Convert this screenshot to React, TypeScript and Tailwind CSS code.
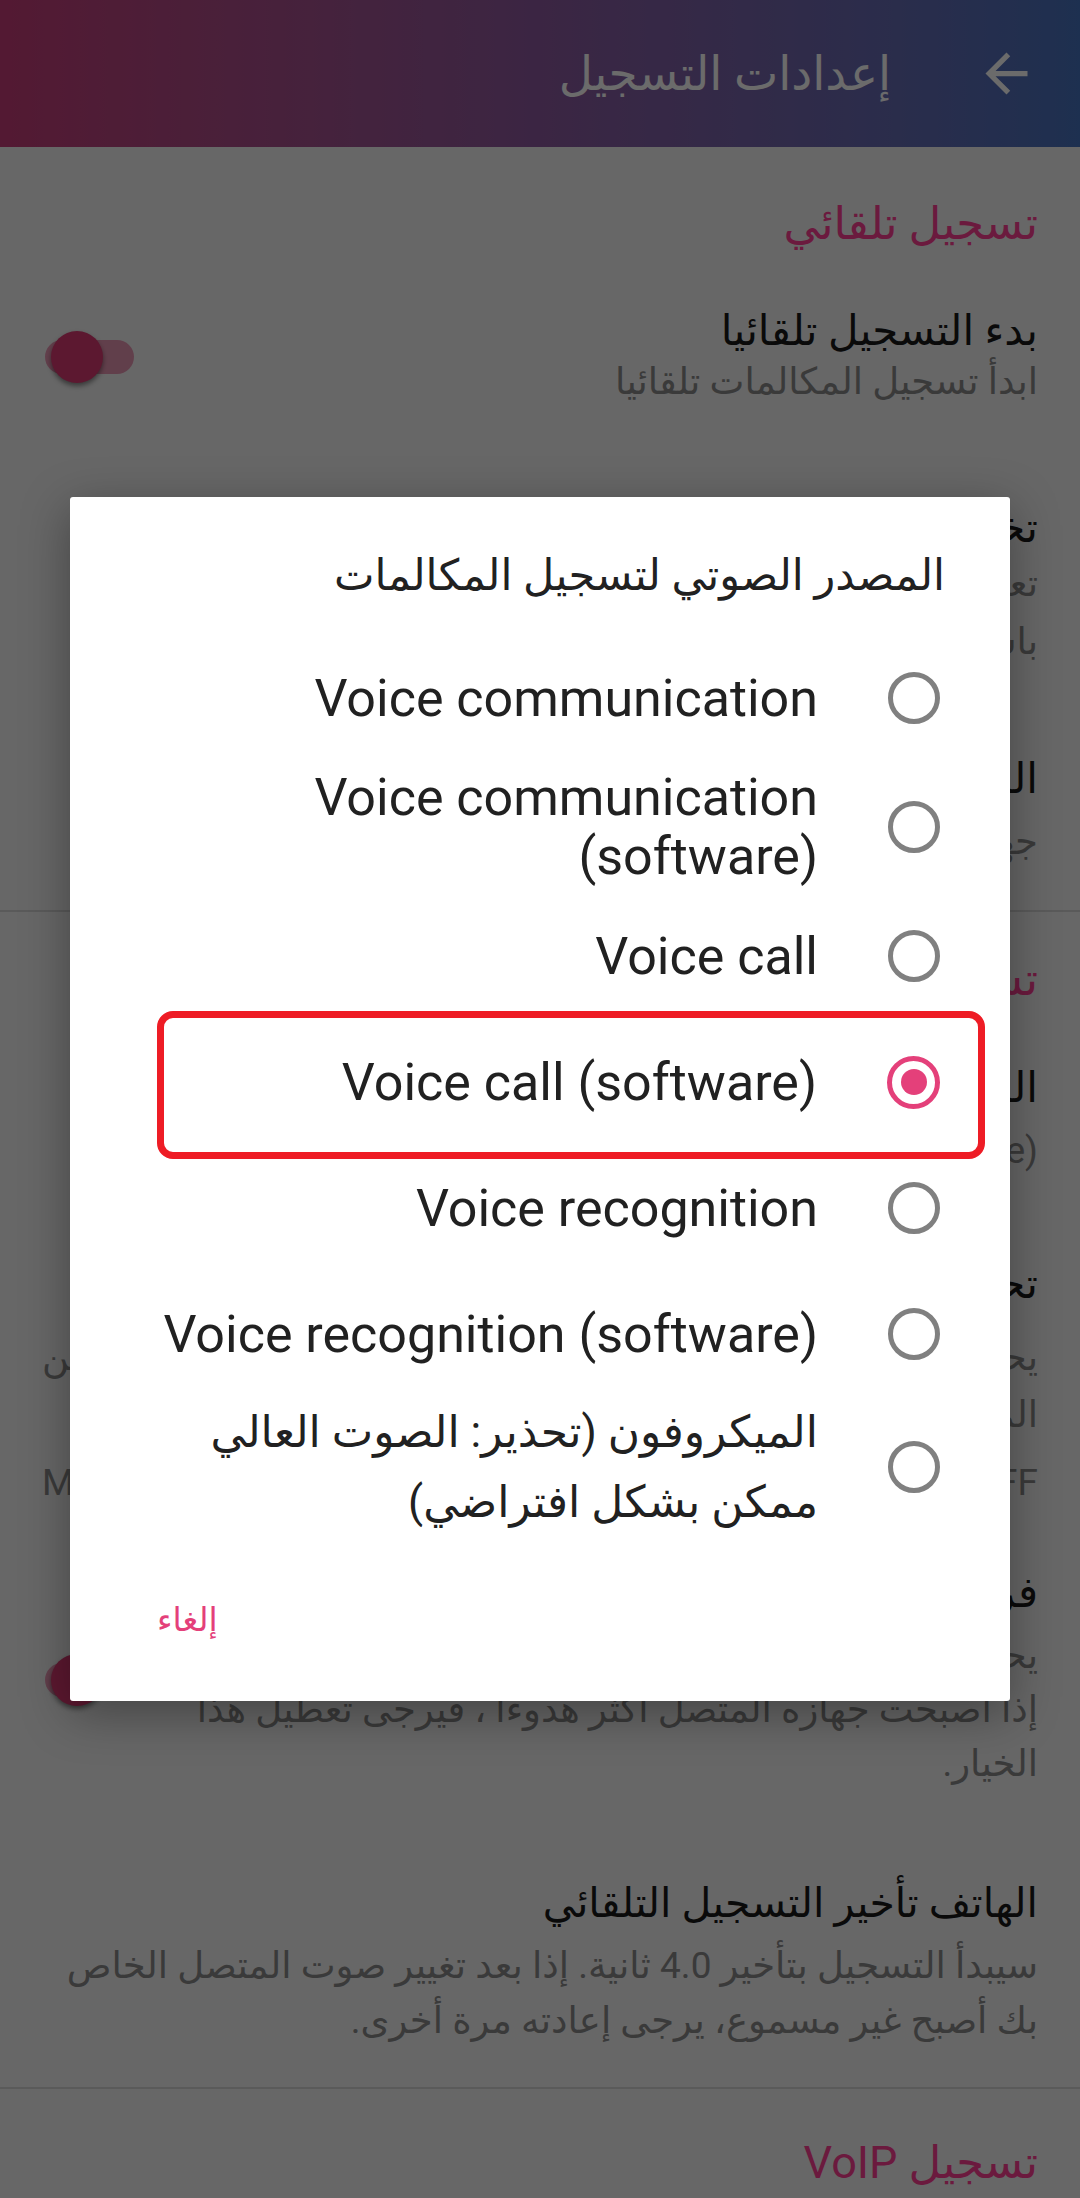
import React from "react";

function BgToggle() {
  return (
    <div className="relative w-[92px] h-[54px] shrink-0">
      <div className="absolute left-[3px] top-[10px] w-[89px] h-[34px] rounded-full bg-[#e897b4]" />
      <div className="absolute left-[9px] top-[1px] w-[52px] h-[52px] rounded-full bg-[#db3972] shadow-[0_3px_5px_rgba(0,0,0,0.45)]" />
    </div>
  );
}

function Radio({ checked }: { checked?: boolean }) {
  if (checked) {
    return (
      <div className="w-[53px] h-[53px] shrink-0 rounded-full border-[5px] border-[#e4407a] flex items-center justify-center">
        <div className="w-[26px] h-[26px] rounded-full bg-[#e4407a]" />
      </div>
    );
  }
  return <div className="w-[52px] h-[52px] shrink-0 rounded-full border-[5px] border-[#808080]" />;
}

function Option({
  children,
  checked,
  arabic,
  extra,
  highlight,
}: {
  children: React.ReactNode;
  checked?: boolean;
  arabic?: boolean;
  extra?: string;
  highlight?: boolean;
}) {
  return (
    <div className={`relative flex items-center min-h-[126px] pr-[70px] pl-[63px] gap-[70px] ${extra ?? ""}`}>
      <Radio checked={checked} />
      <div
        dir={arabic ? "rtl" : "ltr"}
        className={`flex-1 text-right text-[#212121] whitespace-nowrap ${arabic ? "leading-[70px] text-[44px]" : "leading-[59px] text-[52px]"}`}
      >
        {children}
      </div>
      {highlight && (
        <div className="absolute left-[87px] right-[25px] top-[-8px] bottom-[-14px] border-[7px] border-[#ee1c25] rounded-[16px] pointer-events-none" />
      )}
    </div>
  );
}

export default function App() {
  return (
    <div className="relative w-[1080px] h-[2198px] overflow-hidden bg-[#f5f5f5] font-[Roboto,'DejaVu_Sans',sans-serif]">
      {/* Settings page */}
      <div dir="rtl" className="flex flex-col">
        <header className="h-[147px] flex items-center gap-[84px] pr-[42px] bg-linear-to-r from-[#c63c79] via-[#8d5aa0] to-[#4772be]">
          <div className="w-[63px] h-[63px] flex items-center justify-center shrink-0">
            <svg viewBox="0 0 24 24" className="w-[63px] h-[63px] fill-white">
              <path d="M20 11H7.83l5.59-5.59L12 4l-8 8 8 8 1.41-1.41L7.83 13H20v-2z" />
            </svg>
          </div>
          <h1 className="text-[47px] leading-[60px] text-white">إعدادات التسجيل</h1>
        </header>

        <div className="px-[42px] flex flex-col">
          <div className="mt-[51px] text-[45px] leading-[52px] text-[#ff3e94]">تسجيل تلقائي</div>

          <div className="mt-[56px] flex items-center gap-[40px]">
            <div className="flex-1">
              <div className="text-[42px] leading-[50px] text-[#1a1a1a]">بدء التسجيل تلقائيا</div>
              <div className="text-[37px] leading-[52px] text-[#8a8a8a]">ابدأ تسجيل المكالمات تلقائيا</div>
            </div>
            <BgToggle />
          </div>

          <div className="mt-[95px] text-[42px] leading-[50px] text-[#1a1a1a]">تخزين التسجيلات</div>
          <div className="mt-[2px] text-[37px] leading-[58px] text-[#8a8a8a]">
            تعيين مكان حفظ ملفات التسجيل على الجهاز
            <br />
            باستخدام مدير الملفات
          </div>

          <div className="mt-[83px] text-[42px] leading-[50px] text-[#1a1a1a]">المجلد</div>
          <div className="mt-[9px] text-[37px] leading-[58px] text-[#8a8a8a]">جهاز التخزين الداخلي</div>

          <div className="mt-[39px] -mx-[42px] h-[2px] bg-[#d6d6d6]" />

          <div className="mt-[42px] text-[45px] leading-[52px] text-[#ff3e94]">تسجيل المكالمات</div>

          <div className="mt-[57px] text-[42px] leading-[50px] text-[#1a1a1a]">المصدر الصوتي لتسجيل المكالمات</div>
          <div dir="ltr" className="mt-[9px] text-right text-[37px] leading-[58px] text-[#8a8a8a]">
            Voice call (software)
          </div>

          <div className="mt-[79px] text-[42px] leading-[50px] text-[#1a1a1a]">تحسين مستوى الصوت</div>
          <div className="mt-[20px] text-[37px] leading-[57px] text-[#8a8a8a]">
            <div className="[text-align-last:justify]">يحسن هذا الخيار جودة الصوت عند التسجيل من</div>
            <div>الميكروفون ويرفع مستوى صوت المكالمة</div>
          </div>
          <div dir="ltr" className="mt-[15px] flex justify-between text-[37px] leading-[50px] text-[#8a8a8a]">
            <span>MIC</span>
            <span>OFF</span>
          </div>

          <div className="mt-[60px] flex items-center gap-[40px]">
            <div className="flex-1">
              <div className="text-[42px] leading-[50px] text-[#1a1a1a]">فرض مستوى صوت عالٍ</div>
              <div className="mt-[11px] text-[37px] leading-[54px] text-[#8a8a8a] whitespace-nowrap">
                يحسن هذا الخيار مستوى صوت الطرف الآخر، ولكن
                <br />
                إذا أصبحت جهازه المتصل أكثر هدوءًا ، فيرجى تعطيل هذا
                <br />
                الخيار.
              </div>
            </div>
            <BgToggle />
          </div>

          <div className="mt-[87px] text-[41px] leading-[50px] text-[#1a1a1a]">الهاتف تأخير التسجيل التلقائي</div>
          <div className="mt-[10px] text-[37px] leading-[55px] text-[#8a8a8a] whitespace-nowrap">
            <div>سيبدأ التسجيل بتأخير 4.0 ثانية. إذا بعد تغيير صوت المتصل الخاص</div>
            <div>بك أصبح غير مسموع، يرجى إعادته مرة أخرى.</div>
          </div>

          <div className="mt-[39px] -mx-[42px] h-[2px] bg-[#d6d6d6]" />

          <div className="mt-[48px] text-[45px] leading-[52px] text-[#ff3e94]">تسجيل VoIP</div>
        </div>
      </div>

      {/* Scrim + dialog */}
      <div className="absolute inset-0 bg-black/[0.58] flex items-center justify-center">
        <div dir="rtl" className="w-[940px] bg-white rounded-[3px] shadow-[0_12px_48px_rgba(0,0,0,0.35)] flex flex-col">
          <div className="pt-[48px] pb-[30px] pr-[65px] pl-[63px] text-[43px] leading-[60px] text-[#212121]">
            المصدر الصوتي لتسجيل المكالمات
          </div>

          <Option>Voice communication</Option>
          <Option extra="py-[7px]">
            Voice communication
            <br />
            (software)
          </Option>
          <Option>Voice call</Option>
          <Option checked highlight>
            Voice call (software)
          </Option>
          <Option>Voice recognition</Option>
          <Option>Voice recognition (software)</Option>
          <Option arabic>
            الميكروفون (تحذير: الصوت العالي
            <br />
            ممكن بشكل افتراضي)
          </Option>

          <div className="flex justify-end pl-[87px] pt-[36px] pb-[34px]">
            <div className="h-[94px] flex items-center text-[33px] text-[#e4407a]">إلغاء</div>
          </div>
        </div>
      </div>
    </div>
  );
}
